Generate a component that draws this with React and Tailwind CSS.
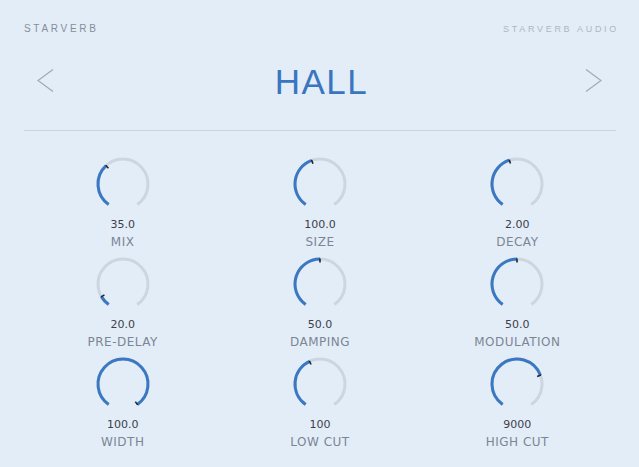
import React from 'react';

const knobs = [
  { label: 'MIX', value: '35.0', pos: 0.353 },
  { label: 'SIZE', value: '100.0', pos: 0.434 },
  { label: 'DECAY', value: '2.00', pos: 0.439 },
  { label: 'PRE-DELAY', value: '20.0', pos: 0.085 },
  { label: 'DAMPING', value: '50.0', pos: 0.5 },
  { label: 'MODULATION', value: '50.0', pos: 0.5 },
  { label: 'WIDTH', value: '100.0', pos: 1 },
  { label: 'LOW CUT', value: '100', pos: 0.415 },
  { label: 'HIGH CUT', value: '9000', pos: 0.74 },
];

// sweep runs from -145deg to +145deg, measured clockwise from 12 o'clock
const START = -145;
const SWEEP = 290;

function polar(cx, cy, r, deg) {
  const a = (deg * Math.PI) / 180;
  return [cx + r * Math.sin(a), cy - r * Math.cos(a)];
}

function arc(cx, cy, r, from, to) {
  const [x1, y1] = polar(cx, cy, r, from);
  const [x2, y2] = polar(cx, cy, r, to);
  const large = to - from > 180 ? 1 : 0;
  return `M ${x1} ${y1} A ${r} ${r} 0 ${large} 1 ${x2} ${y2}`;
}

function Knob({ label, value, pos }) {
  const c = 28;
  const r = 25;
  const angle = START + SWEEP * pos;
  const [tx1, ty1] = polar(c, c, 21.5, angle);
  const [tx2, ty2] = polar(c, c, 25.5, angle);

  return (
    <div className="flex flex-col items-center">
      <svg width="56" height="56" viewBox="0 0 56 56">
        <path d={arc(c, c, r, START, START + SWEEP)} fill="none" stroke="#cdd5df" strokeWidth="3" />
        {pos > 0 && (
          <path d={arc(c, c, r, START, angle)} fill="none" stroke="#3b78c2" strokeWidth="3" />
        )}
        <line x1={tx1} y1={ty1} x2={tx2} y2={ty2} stroke="#1c2633" strokeWidth="1.6" />
      </svg>
      <span className="mt-1.5 text-[11px] leading-[14px] text-[#3b414b]">{value}</span>
      <span className="mt-0.5 text-[12px] leading-4 tracking-[0.5px] text-[#7b8594]">{label}</span>
    </div>
  );
}

function Chevron({ dir }) {
  const pts = dir === 'left' ? '16,0.5 1,11.5 16,22.5' : '1,0.5 16,11.5 1,22.5';
  return (
    <button className="block">
      <svg width="17" height="23" viewBox="0 0 17 23">
        <polyline points={pts} fill="none" stroke="#a3abb5" strokeWidth="1.3" />
      </svg>
    </button>
  );
}

export default function App() {
  return (
    <div className="min-h-[467px] bg-[#e3edf8] pl-6 pr-[23px] font-['Liberation_Sans',Arial,sans-serif]">
      <header className="flex items-start justify-between pt-[23px]">
        <span className="text-[10px] leading-[12px] tracking-[2.7px] text-[#858d98]">STARVERB</span>
        <span className="-mr-[3px] text-[9px] leading-[12px] tracking-[2.7px] text-[#aeb6c0]">
          STARVERB AUDIO
        </span>
      </header>

      <div className="mt-[25px] flex h-10 items-center pl-[13px] pr-[14px]">
        <Chevron dir="left" />
        <h1 className="flex-1 pl-[4px] pt-[2px] text-center text-[35px] leading-[35px] tracking-[1.5px] text-[#3a76bf]">
          HALL
        </h1>
        <Chevron dir="right" />
      </div>

      <div className="mt-[30px] h-px bg-[#cbd3dd]" />

      <div className="mt-[25px] grid grid-cols-3 gap-y-[6px] font-['DejaVu_Sans',Verdana,sans-serif]">
        {knobs.map((k) => (
          <Knob key={k.label} {...k} />
        ))}
      </div>
    </div>
  );
}
